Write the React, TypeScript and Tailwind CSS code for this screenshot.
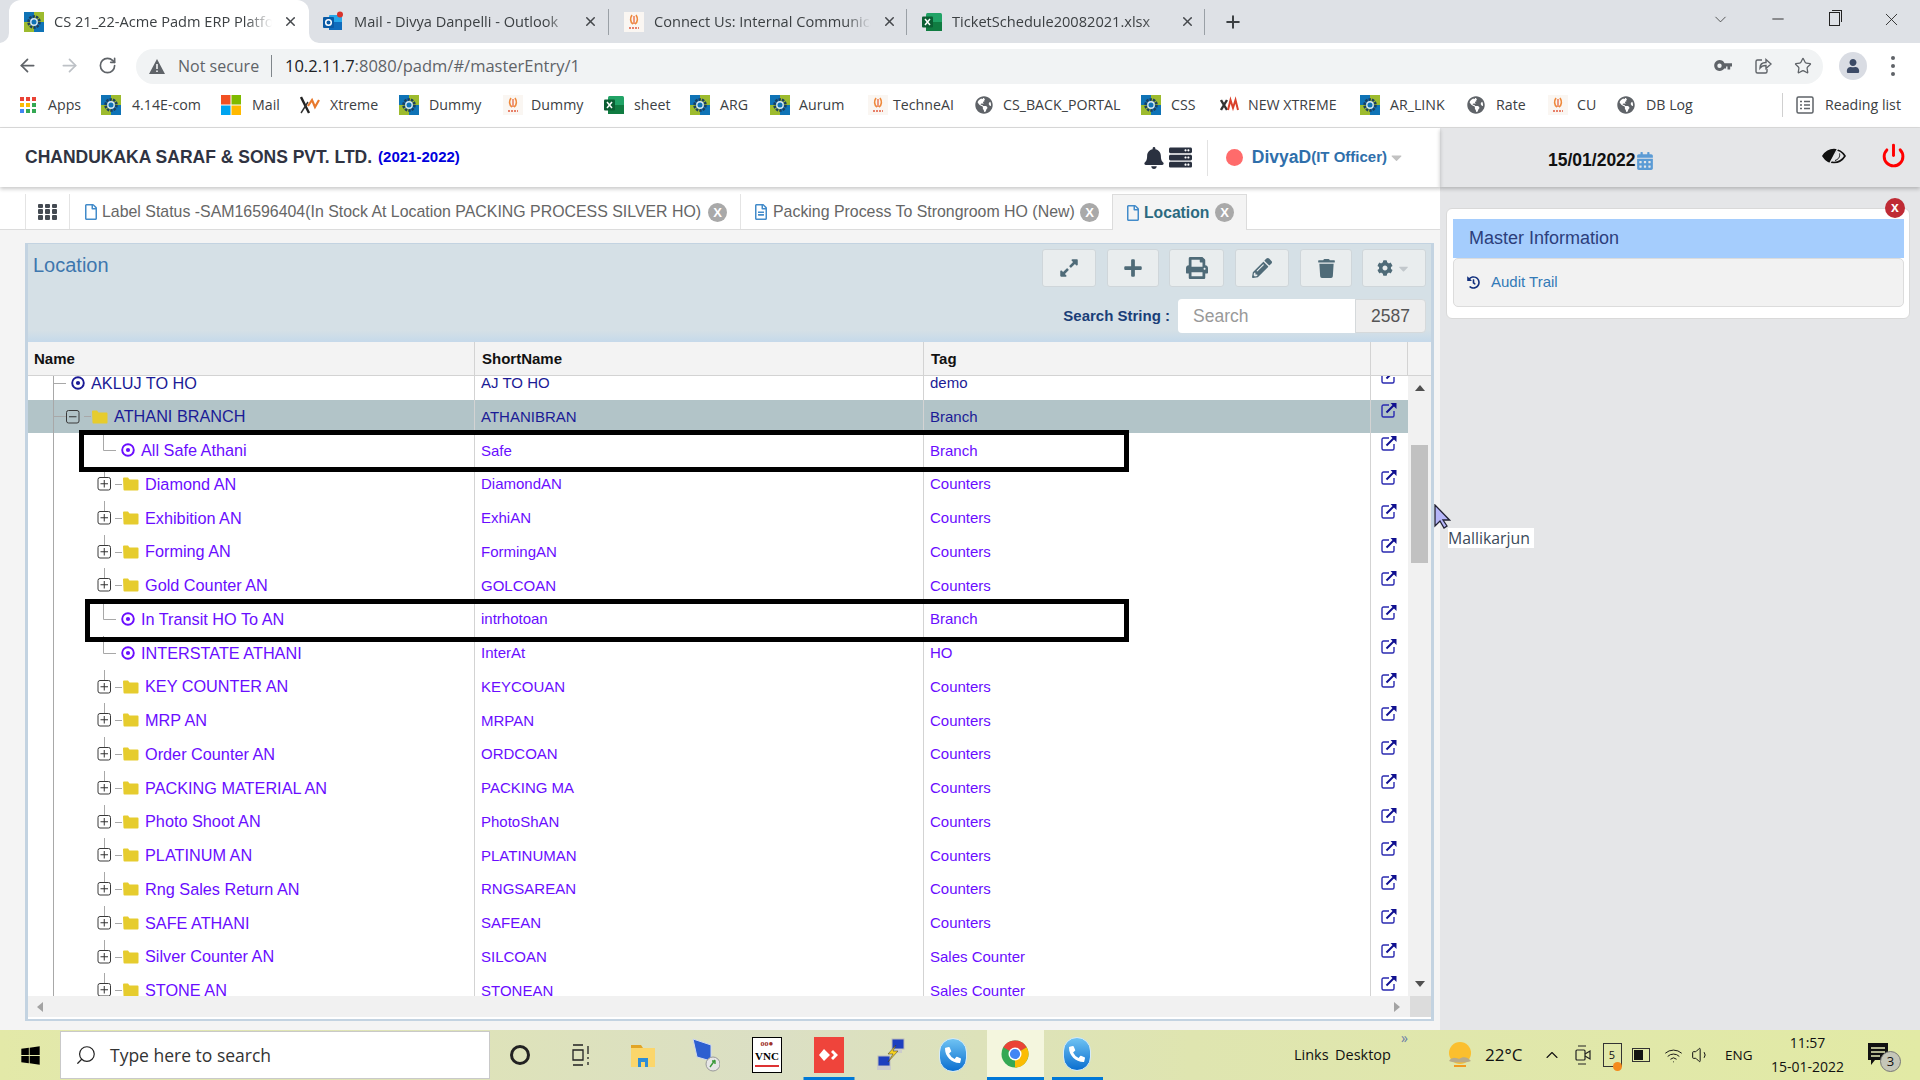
import React from "react";
import {
  FaBell, FaServer, FaExpandAlt, FaPlus, FaPrint, FaPencilAlt, FaTrash, FaCog, FaCalendarAlt,
  FaHistory, FaGlobeAmericas, FaUser, FaPhoneAlt, FaWindows, FaCaretDown, FaRegFile, FaRegFileAlt,
} from "react-icons/fa";
import { ArrowLeft, ArrowRight, RotateCw, Power, X, Minus, Plus, ChevronDown, ChevronUp, Search, Star, Wifi, Volume1 } from "lucide-react";

const CsLogo = () => (
  <svg width="20" height="20" viewBox="0 0 20 20" className="shrink-0">
    <rect width="20" height="20" fill="#0f73b6" />
    <path d="M10 0h10v10h-6a4 4 0 0 0-4-4z" fill="#9dbb2e" />
    <path d="M0 10h6a4 4 0 0 0 4 4v6H0z" fill="#9dbb2e" />
    <circle cx="10" cy="10" r="5.5" fill="none" stroke="#1c3f5f" strokeWidth="2.6" strokeDasharray="2.4 1" />
    <circle cx="10" cy="10" r="3.2" fill="none" stroke="#d9e6ef" strokeWidth="1.4" />
  </svg>
);
const ConnectLogo = () => (
  <svg width="20" height="20" viewBox="0 0 20 20" className="shrink-0">
    <rect width="20" height="20" fill="#faf6f2" />
    <path d="M8 3c-2 3-2 7 1 9" fill="none" stroke="#ef8a3c" strokeWidth="1.6" />
    <path d="M12 3c2 3 2 7-1 9" fill="none" stroke="#ef8a3c" strokeWidth="1.6" />
    <path d="M10 4v8" stroke="#e45b32" strokeWidth="1.2" />
    <path d="M5 16h10" stroke="#e2593c" strokeWidth="1.4" strokeDasharray="2 1" />
  </svg>
);
const ExcelLogo = () => (
  <svg width="20" height="20" viewBox="0 0 20 20" className="shrink-0">
    <rect x="4" y="1" width="16" height="18" rx="1.5" fill="#21a366" />
    <rect x="4" y="10" width="16" height="9" fill="#107c41" />
    <rect y="4.5" width="11" height="11" rx="1" fill="#0b5e33" />
    <path d="M3 7l5 6M8 7l-5 6" stroke="#fff" strokeWidth="1.5" />
  </svg>
);
const OutlookLogo = () => (
  <svg width="22" height="22" viewBox="0 0 22 22" className="shrink-0">
    <rect x="6" y="4" width="13" height="15" rx="1" fill="#28a8ea" />
    <rect x="6" y="11" width="13" height="8" fill="#0f6cbd" />
    <rect y="6" width="11" height="11" rx="1" fill="#0a5aa5" />
    <circle cx="5.5" cy="11.5" r="2.8" fill="none" stroke="#fff" strokeWidth="1.5" />
    <circle cx="17" cy="3.5" r="3" fill="#d8332b" />
  </svg>
);
const MsLogo = () => (
  <svg width="20" height="20" viewBox="0 0 20 20" className="shrink-0">
    <rect width="9.5" height="9.5" fill="#f25022" />
    <rect x="10.5" width="9.5" height="9.5" fill="#7fba00" />
    <rect y="10.5" width="9.5" height="9.5" fill="#00a4ef" />
    <rect x="10.5" y="10.5" width="9.5" height="9.5" fill="#ffb900" />
  </svg>
);
const XmLogo = () => (
  <svg width="20" height="20" viewBox="0 0 20 20" className="shrink-0">
    <path d="M1 2l8 16" stroke="#222" strokeWidth="2.4" />
    <path d="M1 18L8 7" stroke="#333" strokeWidth="1.4" />
    <path d="M8 11l4-6 3 7 4-7" fill="none" stroke="#e8792d" strokeWidth="2.2" />
  </svg>
);
const XmSmall = () => (
  <svg width="20" height="20" viewBox="0 0 20 20" className="shrink-0">
    <path d="M1 5l6 10M7 5L1 15" stroke="#333" strokeWidth="2.4" />
    <path d="M8 15l2.500-10 2.500 8 2.500-8 2.500 10" fill="none" stroke="#d9412b" strokeWidth="2" />
  </svg>
);
const AppsIcon = () => (
  <svg width="16" height="16" viewBox="0 0 16 16" className="shrink-0">
    {[["#ea4335", "#ea4335", "#ea4335"], ["#fbbc04", "#fbbc04", "#34a853"], ["#4285f4", "#34a853", "#34a853"]].map((r, i) =>
      r.map((c, j) => <rect key={`${i}${j}`} x={j * 6} y={i * 6} width="4" height="4" fill={c} />)
    )}
  </svg>
);
const Globe = () => <FaGlobeAmericas className="text-[#5f6368] text-[18px] shrink-0" />;

const bookmarks: { name: string; icon: React.ReactNode; w: string; off: string }[] = [
  { name: "Apps", icon: <AppsIcon />, w: "w-[81px]", off: "w-[28px]" },
  { name: "4.14E-com", icon: <CsLogo />, w: "w-[120px]", off: "w-[31px]" },
  { name: "Mail", icon: <MsLogo />, w: "w-[79px]", off: "w-[31px]" },
  { name: "Xtreme", icon: <XmLogo />, w: "w-[99px]", off: "w-[30px]" },
  { name: "Dummy", icon: <CsLogo />, w: "w-[104px]", off: "w-[30px]" },
  { name: "Dummy", icon: <ConnectLogo />, w: "w-[101px]", off: "w-[28px]" },
  { name: "sheet", icon: <ExcelLogo />, w: "w-[86px]", off: "w-[30px]" },
  { name: "ARG", icon: <CsLogo />, w: "w-[80px]", off: "w-[30px]" },
  { name: "Aurum", icon: <CsLogo />, w: "w-[98px]", off: "w-[29px]" },
  { name: "TechneAI", icon: <ConnectLogo />, w: "w-[107px]", off: "w-[25px]" },
  { name: "CS_BACK_PORTAL", icon: <Globe />, w: "w-[166px]", off: "w-[28px]" },
  { name: "CSS", icon: <CsLogo />, w: "w-[79px]", off: "w-[30px]" },
  { name: "NEW XTREME", icon: <XmSmall />, w: "w-[140px]", off: "w-[28px]" },
  { name: "AR_LINK", icon: <CsLogo />, w: "w-[107px]", off: "w-[30px]" },
  { name: "Rate", icon: <Globe />, w: "w-[81px]", off: "w-[29px]" },
  { name: "CU", icon: <ConnectLogo />, w: "w-[69px]", off: "w-[29px]" },
  { name: "DB Log", icon: <Globe />, w: "w-[165px]", off: "w-[29px]" },
];

function BrowserTab({ icon, title, active, width, divider }: { icon: React.ReactNode; title: string; active?: boolean; width: string; divider?: boolean }) {
  return (
    <div className={`relative flex items-center h-full pl-[15px] ${width} ${active ? "bg-white rounded-t-[12px]" : ""}`}>
      {active && (
        <>
          <svg width="10" height="10" viewBox="0 0 10 10" className="absolute -left-[10px] bottom-0"><path d="M10 0v10H0a10 10 0 0 0 10-10z" fill="#fff" /></svg>
          <svg width="10" height="10" viewBox="0 0 10 10" className="absolute -right-[10px] bottom-0"><path d="M0 0v10h10A10 10 0 0 1 0 0z" fill="#fff" /></svg>
        </>
      )}
      <div className="w-[20px] flex justify-center">{icon}</div>
      <div className="ml-[10px] w-[218px] overflow-hidden whitespace-nowrap text-[14.600px] text-[#3c4043] [mask-image:linear-gradient(90deg,#000_88%,transparent)]">{title}</div>
      <div className="w-[36px] flex justify-center"><X size={15} strokeWidth={2.4} className="text-[#45484c]" /></div>
      {divider && <div className="absolute right-0 top-[9px] h-[26px] w-px bg-[#9aa0a6]" />}
    </div>
  );
}

type Row = { name: string; short: string; tag: string; kind: "leaf0" | "folder0" | "leaf1" | "folder1"; dark?: boolean; selected?: boolean };
const rows: Row[] = [
  { name: "AKLUJ TO HO", short: "AJ TO HO", tag: "demo", kind: "leaf0", dark: true },
  { name: "ATHANI BRANCH", short: "ATHANIBRAN", tag: "Branch", kind: "folder0", dark: true, selected: true },
  { name: "All Safe Athani", short: "Safe", tag: "Branch", kind: "leaf1" },
  { name: "Diamond AN", short: "DiamondAN", tag: "Counters", kind: "folder1" },
  { name: "Exhibition AN", short: "ExhiAN", tag: "Counters", kind: "folder1" },
  { name: "Forming AN", short: "FormingAN", tag: "Counters", kind: "folder1" },
  { name: "Gold Counter AN", short: "GOLCOAN", tag: "Counters", kind: "folder1" },
  { name: "In Transit HO To AN", short: "intrhotoan", tag: "Branch", kind: "leaf1" },
  { name: "INTERSTATE ATHANI", short: "InterAt", tag: "HO", kind: "leaf1" },
  { name: "KEY COUNTER AN", short: "KEYCOUAN", tag: "Counters", kind: "folder1" },
  { name: "MRP AN", short: "MRPAN", tag: "Counters", kind: "folder1" },
  { name: "Order Counter AN", short: "ORDCOAN", tag: "Counters", kind: "folder1" },
  { name: "PACKING MATERIAL AN", short: "PACKING MA", tag: "Counters", kind: "folder1" },
  { name: "Photo Shoot AN", short: "PhotoShAN", tag: "Counters", kind: "folder1" },
  { name: "PLATINUM AN", short: "PLATINUMAN", tag: "Counters", kind: "folder1" },
  { name: "Rng Sales Return AN", short: "RNGSAREAN", tag: "Counters", kind: "folder1" },
  { name: "SAFE ATHANI", short: "SAFEAN", tag: "Counters", kind: "folder1" },
  { name: "Silver Counter AN", short: "SILCOAN", tag: "Sales Counter", kind: "folder1" },
  { name: "STONE AN", short: "STONEAN", tag: "Sales Counter", kind: "folder1" },
];

const Folder = ({ x }: { x: number }) => (
  <path d={`M${x} 11.500a1 1 0 0 1 1-1h4l1.500 2h8a1 1 0 0 1 1 1v9a1 1 0 0 1-1 1h-13a1 1 0 0 1-1-1z`} fill="#e6cc2e" />
);
const Box = ({ x, minus }: { x: number; minus?: boolean }) => (
  <g>
    <rect x={x} y="10.500" width="12.500" height="12.500" rx="2" fill="none" stroke="#3a3a3a" strokeWidth="1" />
    <path d={`M${x + 2.5} 16.750h7.500`} stroke="#333" />
    {!minus && <path d={`M${x + 6.25} 13v7.500`} stroke="#333" />}
  </g>
);
const Ring = ({ cx }: { cx: number }) => (
  <g>
    <circle cx={cx} cy="17" r="5.800" fill="none" stroke="currentColor" strokeWidth="1.900" />
    <circle cx={cx} cy="17" r="2.100" fill="currentColor" />
  </g>
);

function Gutter({ kind }: { kind: Row["kind"] }) {
  const w = { leaf0: 63, folder0: 86, leaf1: 113, folder1: 117 }[kind];
  return (
    <svg width={w} height="34" className="shrink-0 overflow-visible">
      <path d="M25.500 -1V35" stroke="#a8a8a8" />
      {kind === "leaf0" && (<><path d="M25.500 17.500H38" stroke="#a8a8a8" /><Ring cx={50} /></>)}
      {kind === "folder0" && (<><path d="M25.500 16.500H38M56 16.500H63" stroke="#a8a8a8" /><Box x={38.5} minus /><Folder x={64} /></>)}
      {kind === "leaf1" && (<><path d="M75.500 0V17.500H88" stroke="#a8a8a8" fill="none" /><Ring cx={100} /></>)}
      {kind === "folder1" && (<><path d="M76.500 0V10M87 17.500H94" stroke="#a8a8a8" /><Box x={70} /><Folder x={95} /></>)}
    </svg>
  );
}

const LinkIcon = () => (
  <svg width="16" height="16" viewBox="0 0 16 16" fill="none">
    <path d="M8 3H2.500A1.500 1.500 0 0 0 1 4.500v9A1.500 1.500 0 0 0 2.500 15h9a1.500 1.500 0 0 0 1.500-1.500V9" stroke="#2a2ab0" strokeWidth="1.400" />
    <path d="M5.500 10.500L13 3" stroke="#101090" strokeWidth="2" />
    <path d="M9.500 1H15.500V7z" fill="#101090" />
  </svg>
);

const Btn = ({ w, children }: { w: string; children: React.ReactNode }) => (
  <div className={`${w} h-[38px] flex items-center justify-center rounded-[3px] bg-[#e9edee] border border-[#cfd6da] text-[#4f6b78]`}>{children}</div>
);
const CloseDot = () => (
  <div className="w-[19px] h-[19px] rounded-full bg-[#a9a9a9] text-white text-[13px] leading-[19px] text-center font-bold shrink-0">X</div>
);

const TaskCell = ({ children, w = "w-[62px]" }: { children: React.ReactNode; w?: string }) => (
  <div className={`${w} h-full flex items-center justify-center shrink-0`}>{children}</div>
);
const PhoneIcon = () => (
  <div className="w-[28px] h-[34px] rounded-full bg-[linear-gradient(180deg,#6fc3f3,#0b6fd0)] flex items-center justify-center border border-[#d5ebf9]">
    <FaPhoneAlt className="text-white text-[16px]" />
  </div>
);
const Chrome = () => (
  <svg width="28" height="28" viewBox="0 0 28 28">
    <circle cx="14" cy="14" r="13.500" fill="#34a853" />
    <path d="M14 .500A13.500 13.500 0 0 1 25.700 7.250L14 14 2.300 7.250A13.500 13.500 0 0 1 14 .500z" fill="#ea4335" />
    <path d="M25.700 7.250A13.500 13.500 0 0 1 14 27.500L14 14z" fill="#fbbc04" />
    <circle cx="14" cy="14" r="6.500" fill="#fff" />
    <circle cx="14" cy="14" r="5.100" fill="#4285f4" />
  </svg>
);

export default function App() {
  return (
    <div className="relative w-[1920px] h-[1080px] overflow-hidden flex flex-col bg-white font-['Liberation_Sans',Arial,sans-serif]">
      {/* Tab strip */}
      <div className="h-[43px] shrink-0 bg-[#dee1e6] flex items-end pl-[9px] font-['Open_Sans',sans-serif]">
        <div className="h-[43px] flex">
          <BrowserTab active width="w-[300px]" icon={<CsLogo />} title="CS 21_22-Acme Padm ERP Platform" />
          <BrowserTab width="w-[300px]" divider icon={<OutlookLogo />} title="Mail - Divya Danpelli - Outlook" />
          <BrowserTab width="w-[298px]" divider icon={<ConnectLogo />} title="Connect Us: Internal Communication" />
          <BrowserTab width="w-[298px]" divider icon={<ExcelLogo />} title="TicketSchedule20082021.xlsx" />
        </div>
        <div className="h-full w-[56px] flex items-center justify-center"><Plus size={20} strokeWidth={2.4} className="text-[#3c4043]" /></div>
        <div className="ml-auto h-full flex">
          <div className="w-[57px] flex items-center justify-center -mt-[5px]"><ChevronDown size={19} strokeWidth={1} className="text-[#333]" /></div>
          <div className="w-[57px] flex items-center justify-center -mt-[5px]"><Minus size={18} strokeWidth={1.2} className="text-[#222]" /></div>
          <div className="w-[57px] flex items-center justify-center -mt-[5px]">
            <div className="relative w-[11px] h-[14px] border border-[#222] bg-[#dee1e6] after:absolute after:-top-[3px] after:-right-[3px] after:w-[10px] after:h-[12px] after:border-t after:border-r after:border-[#222]" />
          </div>
          <div className="w-[57px] flex items-center justify-center -mt-[5px]"><X size={21} strokeWidth={1} className="text-[#222]" /></div>
        </div>
      </div>

      {/* Address bar */}
      <div className="h-[45px] shrink-0 flex items-center bg-white font-['Open_Sans',sans-serif]">
        <div className="w-[54px] flex justify-center"><ArrowLeft size={21} strokeWidth={2} className="text-[#5f6368]" /></div>
        <div className="w-[30px] flex justify-center"><ArrowRight size={21} strokeWidth={2} className="text-[#bdc1c6]" /></div>
        <div className="w-[52px] flex justify-start pl-[14px]"><RotateCw size={19} strokeWidth={2.1} className="text-[#5f6368]" /></div>
        <div className="w-[1687px] h-[35px] mt-[1px] rounded-full bg-[#f1f3f4] flex items-center pl-[13px]">
          <svg width="16" height="15" viewBox="0 0 16 15" className="shrink-0"><path d="M8 0l8 15H0z" fill="#5f6368" /><path d="M8 5v5M8 11.500v1.500" stroke="#fff" strokeWidth="1.500" /></svg>
          <span className="ml-[13px] w-[84px] whitespace-nowrap text-[16px] text-[#5f6368]">Not secure</span>
          <span className="ml-[9px] w-px h-[22px] bg-[#80868b]" />
          <span className="ml-[13px] whitespace-nowrap text-[16.500px]"><span className="text-[#202124]">10.2.11.7</span><span className="text-[#5f6368]">:8080/padm/#/masterEntry/1</span></span>
          <div className="ml-auto flex items-center">
            <div className="w-[40px] flex justify-center">
              <svg width="18" height="12" viewBox="0 0 18 12" fill="#5f6368"><path d="M5.500 0a5.500 5.500 0 0 1 5 3.200H18v3.300h-1.800v3h-2.700v-3h-1.400v2h-1.800A5.500 5.500 0 1 1 5.500 0zm0 3.500a2.200 2.200 0 1 0 0 4.400 2.200 2.200 0 0 0 0-4.400z" /></svg>
            </div>
            <div className="w-[40px] flex justify-center">
              <svg width="18" height="18" viewBox="0 0 18 18" fill="none" stroke="#5f6368" strokeWidth="1.400"><path d="M8 3H3.500A1.500 1.500 0 0 0 2 4.500v10A1.500 1.500 0 0 0 3.500 16h8a1.500 1.500 0 0 0 1.500-1.500V12" /><path d="M6 11c0-4 3-5.500 6-5.500V2.500l5 4.500-5 4.500V8.500c-3 0-5 1-6 2.500z" /></svg>
            </div>
            <div className="w-[40px] flex justify-center"><Star size={18} strokeWidth={1.700} className="text-[#5f6368]" /></div>
          </div>
        </div>
        <div className="w-[60px] flex justify-center">
          <div className="w-[28px] h-[28px] rounded-full bg-[#d9dce3] flex items-center justify-center"><FaUser className="text-[#3c4a66] text-[14px]" /></div>
        </div>
        <div className="w-[20px] flex flex-col items-center gap-[4px]">
          <i className="block w-[4px] h-[4px] rounded-full bg-[#5f6368]" />
          <i className="block w-[4px] h-[4px] rounded-full bg-[#5f6368]" />
          <i className="block w-[4px] h-[4px] rounded-full bg-[#5f6368]" />
        </div>
      </div>

      {/* Bookmarks */}
      <div className="h-[40px] shrink-0 pl-[20px] pb-[5px] flex items-center bg-white border-b border-[#dcdcdc] font-['Open_Sans',sans-serif] text-[14.200px] text-[#3c4043]">
        {bookmarks.map((b, i) => (
          <div key={i} className={`${b.w} flex items-center shrink-0 whitespace-nowrap`}>
            <div className={`${b.off} shrink-0`}>{b.icon}</div>
            <span>{b.name}</span>
          </div>
        ))}
        <div className="h-[24px] w-px bg-[#d0d0d0]" />
        <svg width="18" height="18" viewBox="0 0 18 18" fill="none" stroke="#5f6368" strokeWidth="1.500" className="ml-[13px] shrink-0"><rect x="1" y="1" width="16" height="16" rx="1.500" /><path d="M4 5.500h2M8 5.500h6M4 9h2M8 9h6M4 12.500h2M8 12.500h6" /></svg>
        <span className="ml-[11px] whitespace-nowrap">Reading list</span>
      </div>

      {/* App area */}
      <div className="flex-1 min-h-0 flex">
        {/* Left column */}
        <div className="w-[1440px] shrink-0 flex flex-col bg-[#f4f4f4]">
          <div className="relative z-10 h-[59px] shrink-0 bg-white shadow-[0_2px_4px_rgba(0,0,0,0.22)] flex items-center pl-[25px]">
            <span className="text-[17.500px] font-bold text-[#2f3342] whitespace-nowrap">CHANDUKAKA SARAF &amp; SONS PVT. LTD.</span>
            <span className="ml-[6px] text-[15px] font-bold text-[#0000dd] whitespace-nowrap">(2021-2022)</span>
            <div className="ml-auto flex items-center pr-[35px]">
              <FaBell className="text-[#2a3140] text-[22px]" />
              <FaServer className="ml-[4px] text-[#2a3140] text-[23px]" />
              <div className="ml-[15px] w-px h-[36px] bg-[#e2e2e2]" />
              <div className="ml-[18px] w-[17px] h-[17px] rounded-full bg-[#ff6b6b]" />
              <span className="ml-[9px] text-[17.500px] font-bold text-[#2f6fab]">DivyaD</span>
              <span className="text-[15px] font-bold text-[#2f6fab]">(IT Officer)</span>
              <FaCaretDown className="ml-[1px] text-[#c2c2c2] text-[17px]" />
            </div>
          </div>

          {/* App tabs */}
          <div className="h-[43px] shrink-0 bg-white border-b border-[#dcdcdc] pl-[25px] flex items-stretch text-[15.900px] text-[#666] mt-0">
            <div className="w-[45px] mt-[7px] border-x border-[#e4e4e4] flex items-center justify-center">
              <div className="grid grid-cols-3 gap-[1.500px] w-[20px] h-[16px]">
                {Array.from({ length: 9 }).map((_, i) => <i key={i} className="block bg-[#444a52] rounded-[1px]" />)}
              </div>
            </div>
            <div className="w-[671px] mt-[7px] pt-[1px] flex items-center pl-[13px] border-r border-[#e4e4e4] whitespace-nowrap">
              <FaRegFile className="text-[#428bca] text-[16px] shrink-0" />
              <span className="ml-[3px] w-[601px] shrink-0">Label Status -SAM16596404(In Stock At Location PACKING PROCESS SILVER HO)</span>
              <span className="ml-[5px]"><CloseDot /></span>
            </div>
            <div className="w-[371px] mt-[7px] pt-[1px] flex items-center pl-[12px] whitespace-nowrap">
              <FaRegFileAlt className="text-[#428bca] text-[16px] shrink-0" />
              <span className="ml-[4px] w-[302px] shrink-0">Packing Process To Strongroom HO (New)</span>
              <span className="ml-[5px]"><CloseDot /></span>
            </div>
            <div className="w-[135px] mt-[7px] -mb-px bg-[#f4f4f4] border border-b-0 border-[#dcdcdc] flex items-center pl-[12px] whitespace-nowrap">
              <FaRegFile className="text-[#428bca] text-[16px] shrink-0" />
              <span className="ml-[3px] w-[66px] shrink-0 font-bold text-[15.700px] text-[#2b6a80]">Location</span>
              <span className="ml-[5px]"><CloseDot /></span>
            </div>
          </div>

          {/* Panel */}
          <div className="ml-[25px] mt-[13px] w-[1409px] h-[778px] border-x-[3px] border-t border-b-2 border-[#c3d3e1] bg-white flex flex-col">
            <div className="h-[98px] shrink-0 bg-[linear-gradient(180deg,#d5e0e6_88%,#c5d9ea_100%)] flex flex-col pr-[5px]">
              <div className="flex items-start justify-between pt-[5px]">
                <span className="ml-[5px] mt-[1px] text-[20px] text-[#3e77ae]">Location</span>
                <div className="flex">
                  <Btn w="w-[54px]"><FaExpandAlt className="text-[20px]" /></Btn>
                  <div className="w-[11px]" />
                  <Btn w="w-[52px]"><FaPlus className="text-[20px]" /></Btn>
                  <div className="w-[10px]" />
                  <Btn w="w-[55px]"><FaPrint className="text-[22px]" /></Btn>
                  <div className="w-[11px]" />
                  <Btn w="w-[54px]"><FaPencilAlt className="text-[20px]" /></Btn>
                  <div className="w-[11px]" />
                  <Btn w="w-[52px]"><FaTrash className="text-[19px]" /></Btn>
                  <div className="w-[10px]" />
                  <Btn w="w-[64px]"><FaCog className="text-[16px]" /><FaCaretDown className="ml-[3px] text-[#c2c8cc] text-[15px]" /></Btn>
                </div>
              </div>
              <div className="mt-[12px] flex items-center justify-end">
                <span className="mr-[8px] text-[15px] font-bold text-[#1a3e78]">Search String :</span>
                <div className="w-[177px] h-[34px] bg-white rounded-l-[4px] pl-[15px] flex items-center text-[17.500px] text-[#999]">Search</div>
                <div className="w-[71px] h-[34px] bg-[#eeeeee] border border-[#d5d9db] rounded-r-[4px] pl-[15px] flex items-center text-[17.500px] text-[#555]">2587</div>
              </div>
            </div>

            {/* Table header */}
            <div className="h-[34px] shrink-0 flex bg-[#f3f3f3] border-b border-[#d3d3d3] text-[15px] font-bold text-[#111]">
              <div className="w-[447px] border-r border-[#d3d3d3] pl-[6px] pt-[1px] flex items-center">Name</div>
              <div className="w-[449px] border-r border-[#d3d3d3] pl-[7px] pt-[1px] flex items-center">ShortName</div>
              <div className="w-[447px] border-r border-[#d3d3d3] pl-[7px] pt-[1px] flex items-center">Tag</div>
              <div className="w-[37px] border-r border-[#d3d3d3]" />
              <div className="flex-1" />
            </div>

            {/* Table body */}
            <div className="relative h-[620px] shrink-0 flex overflow-hidden">
              <div className="w-[1380px] shrink-0 overflow-hidden">
                <div className="-mt-[10.100px]">
                  {rows.map((r, i) => (
                    <div key={i} className={`h-[33.750px] flex ${r.selected ? "bg-[#b2c4c8]" : "bg-white"} ${r.dark ? "text-[#1b1b96]" : "text-[#6a0dff]"}`}>
                      <div className="w-[447px] border-r border-[#d3d3d3] flex items-center text-[16.250px] whitespace-nowrap"><Gutter kind={r.kind} /><span>{r.name}</span></div>
                      <div className="w-[449px] border-r border-[#d3d3d3] pl-[6px] pt-[1px] flex items-center text-[15px]">{r.short}</div>
                      <div className="w-[447px] border-r border-[#d3d3d3] pl-[6px] pt-[1px] flex items-center text-[15px]">{r.tag}</div>
                      <div className="w-[37px] flex items-center justify-center pb-[14px] pr-[2px]"><LinkIcon /></div>
                    </div>
                  ))}
                </div>
              </div>
              <div className="flex-1 bg-[#f1f1f1] flex flex-col items-center relative">
                <div className="mt-[9px] w-0 h-0 border-x-[5px] border-x-transparent border-b-[6px] border-b-[#505050]" />
                <div className="mt-[54px] w-[17px] h-[118px] bg-[#c1c1c1]" />
                <div className="mt-auto mb-[9px] w-0 h-0 border-x-[5px] border-x-transparent border-t-[6px] border-t-[#505050]" />
              </div>
              {/* Highlight rectangles over the rows */}
              <div className="absolute left-[51px] top-[54px] w-[1050px] h-[42px] border-[5px] border-black" />
              <div className="absolute left-[57px] top-[223px] w-[1044px] h-[43px] border-[5px] border-black" />
            </div>

            {/* Horizontal scrollbar */}
            <div className="h-[21px] shrink-0 flex bg-[#f1f1f1] items-center">
              <div className="ml-[9px] w-0 h-0 border-y-[5px] border-y-transparent border-r-[6px] border-r-[#a3a3a3]" />
              <div className="ml-auto mr-[10px] w-0 h-0 border-y-[5px] border-y-transparent border-l-[6px] border-l-[#a3a3a3]" />
              <div className="w-[21px] h-full bg-[#dcdcdc]" />
            </div>
          </div>
        </div>

        {/* Right column */}
        <div className="flex-1 bg-[#e5e6e8] flex flex-col">
          <div className="relative z-10 h-[59px] shrink-0 shadow-[0_2px_4px_rgba(0,0,0,0.22)] flex items-center pl-[108px]">
            <span className="mt-[6px] text-[17.500px] font-bold text-[#111]">15/01/2022</span>
            <FaCalendarAlt className="mt-[6px] text-[#5b9bd5] text-[18px]" />
            <svg width="24" height="20" viewBox="0 0 24 20" className="ml-[168px] -mt-[3px]">
              <path d="M1 10c2.500-4 6-6.500 11-6.500S20.500 6 23 10c-2.500 4-6 6.500-11 6.500S3.500 14 1 10z" fill="none" stroke="#111" strokeWidth="1.600" />
              <path d="M1 10c2.500-4 6-6.500 11-6.500 1.500 0 2.500.2 3.500.6L8 16C4.800 15 2.800 13 1 10z" fill="#111" />
              <path d="M16.500 1L7 19" stroke="#e5e6e8" strokeWidth="1.400" />
              <path d="M17.500 7.500c.8 3-1 6-4.500 7" fill="none" stroke="#111" strokeWidth="1" />
            </svg>
            <Power size={25} strokeWidth={2.800} className="ml-[35px] -mt-[5px] text-[#ff0000]" />
          </div>
          <div className="relative ml-[6px] mt-[21px] w-[464px] h-[111px] bg-white border border-[#d9d9d9] rounded-[6px] pt-[10px] pl-[6px] pr-[5px]">
            <div className="absolute -top-[11px] right-[4px] w-[20px] h-[20px] rounded-full bg-[#bf2b35] text-white text-[14px] leading-[19px] font-bold text-center">x</div>
            <div className="h-[39px] bg-[#a5cdfd] pl-[16px] flex items-center text-[18px] text-[#2c3e7b]">Master Information</div>
            <div className="h-[49px] bg-[#f2f2f2] border border-[#dcdcdc] rounded-[5px] flex items-center pl-[13px]">
              <FaHistory className="text-[#12307e] text-[13px]" />
              <span className="ml-[11px] text-[15px] text-[#337ab7]">Audit Trail</span>
            </div>
          </div>
        </div>
      </div>

      {/* Windows taskbar */}
      <div className="h-[50px] shrink-0 flex items-stretch bg-[linear-gradient(90deg,#e3e9a8,#dbdfc4_40%,#dfe5b0_62%,#e2eaa5)] font-['Open_Sans',sans-serif] text-[#111]">
        <TaskCell w="w-[60px]"><FaWindows className="text-[21px] text-black" /></TaskCell>
        <div className="w-[430px] shrink-0 mt-[1px] mb-[1px] bg-white border border-[#c9c9c9] flex items-center pl-[14px] text-[17.500px] text-[#333]">
          <Search size={22} strokeWidth={1.300} className="-scale-x-100 text-[#222]" />
          <span className="ml-[13px]">Type here to search</span>
        </div>
        <TaskCell w="w-[60px]"><div className="w-[20px] h-[20px] rounded-full border-[3px] border-[#222]" /></TaskCell>
        <TaskCell>
          <svg width="20" height="24" viewBox="0 0 20 24" fill="none" stroke="#222" strokeWidth="1.300"><path d="M2 2h10M2 7h10v10H2zM2 22h10M17 3v8M17 14v2M17 19v3" /></svg>
        </TaskCell>
        <TaskCell>
          <svg width="28" height="26" viewBox="0 0 28 26"><path d="M2 3h10l2 3H2z" fill="#e2a526" /><rect x="2" y="6" width="24" height="19" fill="#fbd66b" /><path d="M9 25v-9h10v9h-3v-5h-4v5z" fill="#2f8dd6" /></svg>
        </TaskCell>
        <TaskCell>
          <svg width="30" height="36" viewBox="0 0 30 36"><path d="M3 2l18 6v16L7 20z" fill="#2d5fd0" stroke="#cfd8f0" /><circle cx="23" cy="27" r="7" fill="#e6e6e6" stroke="#999" /><path d="M20 30l5-7M22 24h3v3" stroke="#3a9a3a" fill="none" strokeWidth="1.400" /></svg>
        </TaskCell>
        <TaskCell>
          <div className="w-[30px] h-[36px] bg-white border border-black flex flex-col items-center font-['Liberation_Serif',serif] font-bold text-[11px] leading-[13px] text-black">
            <span className="text-[#a0302a] text-[8px] leading-[12px]">oo●</span>
            <span>VNC</span>
            <i className="block w-[24px] h-[2px] mt-[2px] bg-[#d33]" />
          </div>
        </TaskCell>
        <TaskCell>
          <div className="relative h-full flex items-center">
            <div className="w-[30px] h-[36px] bg-[#ef443b] flex items-center justify-center">
              <svg width="20" height="14" viewBox="0 0 20 14" fill="#fff"><path d="M5 1l6 6-6 6-5-6zM14 2l5 5-5 5-2-2 3-3-3-3z" /></svg>
            </div>
            <i className="absolute left-1/2 -translate-x-1/2 bottom-0 block w-[51px] h-[3px] bg-[#0078d7]" />
          </div>
        </TaskCell>
        <TaskCell>
          <svg width="30" height="36" viewBox="0 0 30 36"><rect x="16" y="2" width="12" height="10" fill="#1d3fbf" stroke="#bbb" /><rect x="18" y="12" width="8" height="4" fill="#ccc" /><rect x="2" y="19" width="12" height="10" fill="#1d3fbf" stroke="#bbb" /><rect x="1" y="29" width="14" height="4" fill="#ccc" /><path d="M20 8l-8 9h5l-5 8 10-11h-5z" fill="#f6d21f" stroke="#333" strokeWidth=".5" /></svg>
        </TaskCell>
        <TaskCell><PhoneIcon /></TaskCell>
        <TaskCell>
          <div className="w-[57px] h-full bg-[#f4f6de] flex items-center justify-center border-b-[3px] border-[#0078d7]"><Chrome /></div>
        </TaskCell>
        <TaskCell>
          <div className="w-[51px] h-full flex items-center justify-center border-b-[3px] border-[#0078d7]"><PhoneIcon /></div>
        </TaskCell>
        <div className="w-[186px] shrink-0" />
        <div className="w-[41px] shrink-0 flex items-center text-[14.500px]">Links</div>
        <div className="w-[66px] shrink-0 flex items-center text-[14.500px]">Desktop</div>
        <div className="w-[26px] shrink-0 text-[14px] leading-[14px] pt-[1px] text-[#6b7da8]">»</div>
        <div className="ml-[20px] w-[26px] shrink-0 flex items-center">
          <svg width="26" height="32" viewBox="0 0 26 32"><circle cx="13" cy="14" r="11" fill="#fbbf2e" /><path d="M2 22c3-5 8-3 10-2 4-3 9-2 12 2-5 2-17 2-22 0z" fill="#b8ab8a" /><path d="M7 27h12" stroke="#f29a1f" strokeWidth="2" /></svg>
        </div>
        <div className="ml-[12px] w-[51px] shrink-0 flex items-center text-[17px]">22°C</div>
        <div className="w-[31px] shrink-0 flex items-center justify-center"><ChevronUp size={20} strokeWidth={1.300} /></div>
        <div className="w-[32px] shrink-0 flex items-center justify-center">
          <svg width="16" height="24" viewBox="0 0 16 24" fill="none" stroke="#222" strokeWidth="1.200"><path d="M3 3h8M3 21h8" /><rect x="1" y="7" width="9" height="10" rx="1" /><path d="M10 11l5-3v8l-5-3" /></svg>
        </div>
        <div className="w-[26px] shrink-0 flex items-center justify-center relative">
          <div className="w-[19px] h-[24px] border border-[#333] flex items-center justify-center text-[11px]">5</div>
          <i className="absolute right-[3px] bottom-[9px] block w-[9px] h-[9px] rounded-full bg-[#f48a1c]" />
        </div>
        <div className="w-[32px] shrink-0 flex items-center justify-center">
          <div className="w-[18px] h-[14px] border border-[#333] p-[1px]"><div className="w-[9px] h-full bg-[#111]" /></div>
        </div>
        <div className="w-[32px] shrink-0 flex items-center justify-center"><Wifi size={19} strokeWidth={1.200} /></div>
        <div className="w-[24px] shrink-0 flex items-center justify-center"><Volume1 size={20} strokeWidth={1.200} /></div>
        <div className="ml-[12px] w-[37px] shrink-0 flex items-center text-[13.500px]">ENG</div>
        <div className="w-[91px] shrink-0 flex flex-col items-center justify-center text-[14px] leading-[24px]">
          <span>11:57</span>
          <span>15-01-2022</span>
        </div>
        <div className="w-[50px] shrink-0 flex items-center justify-center relative">
          <svg width="20" height="24" viewBox="0 0 20 24"><path d="M0 0h20v17H7l-4 5v-5H0z" fill="#111" /><path d="M3 5h14M3 9h14M3 13h9" stroke="#e8ecb8" strokeWidth="1.300" /></svg>
          <div className="absolute left-[27px] top-[21px] w-[21px] h-[21px] rounded-full bg-[#c5c6b8] border border-[#777] text-[13px] leading-[19px] text-center text-[#111]">3</div>
        </div>
      </div>

      {/* Mouse pointer and its hover label, floating over the page */}
      <svg width="17" height="25" viewBox="0 0 17 25" className="absolute left-[1434px] top-[504px]">
        <path d="M1 1v21l5-5 4 7 3-2-4-6h6.500z" fill="#b5b5f8" stroke="#222236" strokeWidth="1.300" />
      </svg>
      <div className="absolute left-[1448px] top-[528px] w-[86px] h-[20px] bg-white text-[15.800px] leading-[20px] text-[#3b4a5a] font-['Open_Sans',sans-serif] whitespace-nowrap">Mallikarjun</div>
    </div>
  );
}
